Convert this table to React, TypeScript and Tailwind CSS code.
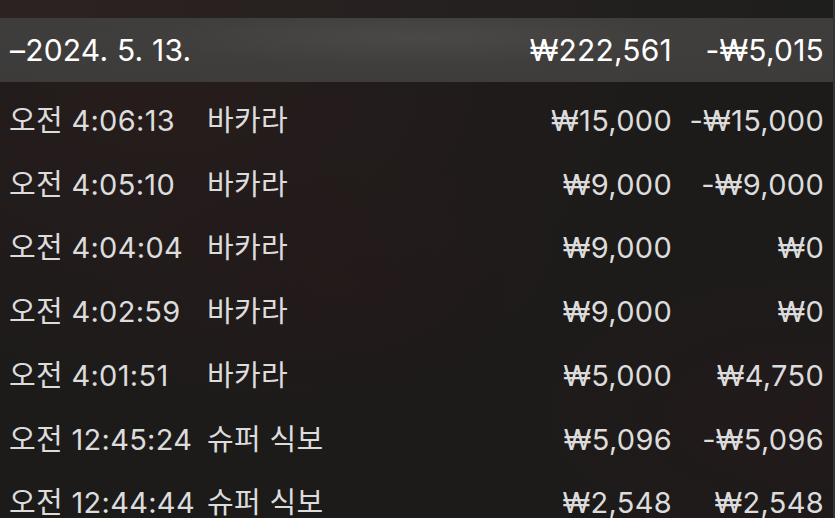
const rows = [
  { time: "오전 4:06:13", game: "바카라", bet: "₩15,000", net: "-₩15,000" },
  { time: "오전 4:05:10", game: "바카라", bet: "₩9,000", net: "-₩9,000" },
  { time: "오전 4:04:04", game: "바카라", bet: "₩9,000", net: "₩0" },
  { time: "오전 4:02:59", game: "바카라", bet: "₩9,000", net: "₩0" },
  { time: "오전 4:01:51", game: "바카라", bet: "₩5,000", net: "₩4,750" },
  { time: "오전 12:45:24", game: "슈퍼 식보", bet: "₩5,096", net: "-₩5,096" },
  { time: "오전 12:44:44", game: "슈퍼 식보", bet: "₩2,548", net: "₩2,548" },
];

export default function App() {
  return (
    <main className="h-[518px] w-[835px] overflow-hidden border-r-2 border-r-[#353433] bg-[#1c1b1a] bg-[radial-gradient(ellipse_at_20%_15%,#271c1c_0%,transparent_55%),radial-gradient(ellipse_at_40%_55%,#211919_0%,transparent_35%),radial-gradient(ellipse_at_97%_80%,#221a1a_0%,transparent_30%)] font-['Inter','Noto_Sans_CJK_KR',sans-serif] text-[#dcdcdc]">
      <div className="h-[18px] bg-[linear-gradient(90deg,#2c2221_0%,#262120_45%,#1e1e1d_100%)]" />

      <div className="flex h-[64px] items-center bg-[#3f3d3b] bg-[radial-gradient(ellipse_at_50%_30%,#4a4947_0%,#403e3c_45%,#3c3b39_100%)] pl-[10px] pr-[9px] text-[30px] tracking-[0.2px] text-white">
        <span className="flex-1">–2024. 5. 13.</span>
        <span className="text-right">₩222,561</span>
        <span className="w-[152px] text-right">-₩5,015</span>
      </div>

      <div className="pt-[7px]">
        {rows.map((r) => (
          <div
            key={r.time}
            className="flex h-[63.7px] items-center pl-[9px] pr-[9px] text-[29px] tracking-[0.3px]"
          >
            <span className="w-[198px] whitespace-nowrap">{r.time}</span>
            <span className="flex-1 whitespace-nowrap">{r.game}</span>
            <span className="text-right">{r.bet}</span>
            <span className="w-[152px] text-right">{r.net}</span>
          </div>
        ))}
      </div>
    </main>
  );
}
